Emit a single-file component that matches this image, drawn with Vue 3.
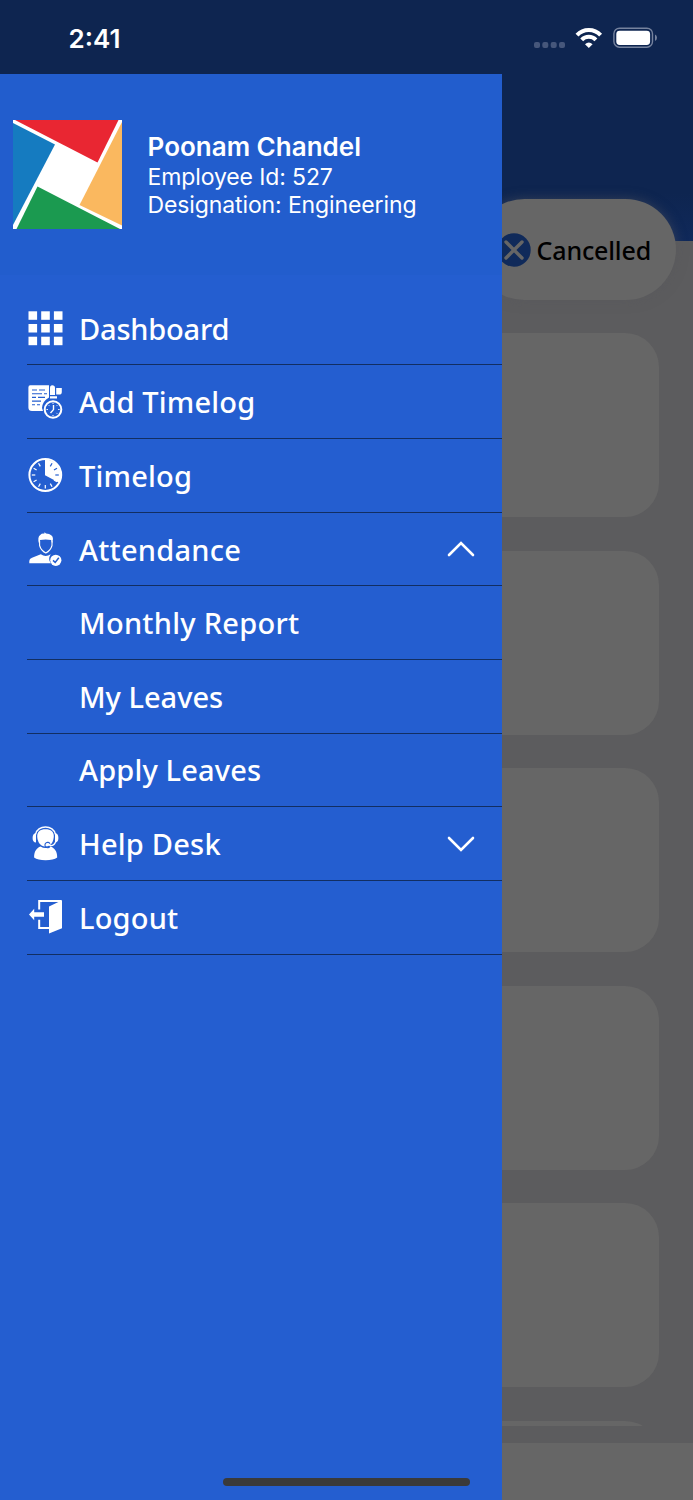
<template>
  <div class="screen">
    <div class="page">
      <header class="page-header"></header>
      <div class="tabs">
        <div class="pill">
          <svg class="pill-icon" viewBox="0 0 34 34">
            <circle cx="17" cy="17" r="16.7" fill="#102a5a" />
            <path d="M9 9L25 25M25 9L9 25" stroke="#666" stroke-width="3.4" stroke-linecap="round" />
          </svg>
          <span class="pill-label">Cancelled</span>
        </div>
      </div>
      <main class="cards">
        <div v-for="n in 6" :key="n" class="card"></div>
      </main>
      <footer class="page-footer"></footer>
    </div>

    <div class="status-bar">
      <span class="time">2:41</span>
      <svg class="status-icons" viewBox="0 0 126 24">
        <g fill="#46577b">
          <rect x="1" y="15" width="6" height="6" rx="2" />
          <rect x="9.3" y="15" width="6" height="6" rx="2" />
          <rect x="17.7" y="15" width="6" height="6" rx="2" />
          <rect x="26" y="15" width="6" height="6" rx="2" />
        </g>
        <g fill="none" stroke="#fff" stroke-width="4">
          <path d="M44 8.2A16 16 0 0 1 67.6 8.2" />
          <path d="M48.7 12.8A9.8 9.8 0 0 1 62.9 12.8" />
        </g>
        <path d="M52 17.2Q55.8 14 59.6 17.2L55.8 21Z" fill="#fff" />
        <rect x="80.9" y="1.2" width="38.6" height="19" rx="5.6" fill="none" stroke="#76839e" stroke-width="1.4" />
        <rect x="83.3" y="3.7" width="33.8" height="14.2" rx="3.4" fill="#fff" />
        <path d="M122 7.5Q124 8.5 124 10.8Q124 13 122 14Z" fill="#76839e" />
      </svg>
    </div>

    <aside class="drawer">
      <section class="profile">
        <svg class="logo" viewBox="0 0 109 109">
          <rect width="109" height="109" fill="#fff" />
          <path d="M2 0H105.5L84.5 42.5Z" fill="#e92632" />
          <path d="M0 3L42 24.5L0 105Z" fill="#157bc0" />
          <path d="M109 2V105.5L66.5 85Z" fill="#fab85f" />
          <path d="M3.5 109L24.5 66.5L107 109Z" fill="#1b9a50" />
        </svg>
        <div class="profile-text">
          <div class="name">Poonam Chandel</div>
          <div class="detail">Employee Id: 527</div>
          <div class="detail">Designation: Engineering</div>
        </div>
      </section>

      <nav class="menu">
        <div v-for="item in items" :key="item.label" class="menu-item">
          <svg class="menu-icon" viewBox="0 0 36 36" fill="#fff">
            <g v-if="item.icon === 'grid'">
              <template v-for="y in 3" :key="y">
                <rect v-for="x in 3" :key="x" :x="x * 12.7 - 11.2" :y="y * 12.7 - 11.4" width="8.6" height="8.5" />
              </template>
            </g>
            <g v-else-if="item.icon === 'log'">
              <path d="M3.2 1.3H22V13.5Q15.5 17 15 24L16 27H5Q1.4 27 1.4 23.5V3.5Q1.4 1.3 3.2 1.3Z" />
              <path d="M5 6H10M12 6H18M5 9.7H15M17 9.7H20M5 13.4H9M11 13.4H18M5 17.1H14M5 20.8H8M10 20.8H13" fill="none" stroke="#245ed0" stroke-width="1.1" />
              <path d="M23 11V4Q23 1.3 25.2 1.3Q28 1.3 28 4V11ZM29.2 4H34.8V8Q34.8 10.6 32 10.6H29.2ZM23 12.2H30V14.5H23Z" />
              <circle cx="26" cy="25.5" r="8.3" fill="#245ed0" stroke="#fff" stroke-width="2" />
              <path d="M26.5 21V25.6L23.5 29" fill="none" stroke="#fff" stroke-width="1.4" />
              <path d="M26 18.8V20M26 31V32.2M19.5 25.5H20.9M31.2 25.5H32.6M30.2 21.3L29.4 22.1M21.8 21.3L22.6 22.1M29.4 28.9L30.2 29.7" stroke="#fff" />
            </g>
            <g v-else-if="item.icon === 'clock'">
              <circle cx="18.3" cy="18" r="15.9" fill="none" stroke="#fff" stroke-width="2" />
              <path d="M18 18.2V2.5A16 16 0 0 1 32.2 25.8Z" />
              <path v-for="n in 11" :key="n" d="M18.3 4.5V8" :transform="`rotate(${n * 30} 18.3 18)`" :stroke="n < 4 ? '#245ed0' : '#fff'" stroke-width="1.2" />
            </g>
            <g v-else-if="item.icon === 'person'">
              <path d="M12 12.5Q10.2 6 13.2 4Q15 2.2 17.2 2.7L17.6 1.2L19 2.5Q26 3.2 26 8L25.2 12.5L24 9Q18.7 7.8 13.2 9Z" />
              <path d="M12.6 10V14.5Q14 19.6 18.8 22Q23.6 19.6 25 14.5V10" fill="none" stroke="#fff" stroke-width="1.1" />
              <path d="M2.3 32.3V30Q2.3 27.8 5 26.8L13.8 23.3Q18.8 26.7 23.7 23.2Q20.4 28.5 24 32.3Z" />
              <circle cx="28.8" cy="29.3" r="5.6" />
              <path d="M26 29.4L28.2 31.4L31.8 26.8" fill="none" stroke="#245ed0" stroke-width="1.5" />
            </g>
            <g v-else-if="item.icon === 'support'">
              <path d="M8.6 8.5C10 -1.4 27 -1.4 28.4 8.5" fill="none" stroke="#fff" stroke-width="1.5" />
              <path d="M9 7V16.5Q5.6 16.3 5.6 12Q5.6 7.3 9 7ZM28 7V16.5Q31.4 16.3 31.4 12Q31.4 7.3 28 7Z" />
              <path d="M10.2 10C10.2 6 13 3.3 18.5 3.3S26.8 6 26.8 10C26.8 14.5 24.7 20.5 18.5 20.5S10.2 14.5 10.2 10Z" />
              <path d="M7.1 31.5C7.1 25 9.7 21.8 13.5 20.4Q18.5 23.4 23.5 20.4C27.5 21.8 30.2 25 30.2 31.5Q26.5 34.3 18.6 34.3T7.1 31.5Z" />
              <path d="M28.5 16C27.5 19.2 25.5 20 22.2 19.4" fill="none" stroke="#fff" stroke-width="1.2" />
              <path d="M23 17.7A2.7 2.7 0 1 0 22.8 20.7" fill="none" stroke="#245ed0" stroke-width="1.1" />
            </g>
            <g v-else-if="item.icon === 'logout'">
              <path d="M12.2 10.5V2.1H34.5M12.2 20.8V29H22" fill="none" stroke="#fff" stroke-width="2" />
              <path d="M22 7.4L35 1.3V29.3L22 34.5ZM2 15.5L7.2 9.8V13.2H17V17.8H7.2V21.2Z" />
            </g>
          </svg>
          <span class="menu-label" :style="{ letterSpacing: item.spacing + 'px' }">{{ item.label }}</span>
          <svg v-if="item.arrow" class="arrow" viewBox="0 0 28 16">
            <path :d="item.arrow === 'up' ? 'M2 14L14 2L26 14' : 'M2 2L14 14L26 2'" />
          </svg>
        </div>
      </nav>
    </aside>

    <div class="home-indicator"></div>
  </div>
</template>

<script setup>
const items = [
  { label: 'Dashboard', icon: 'grid', spacing: -0.2 },
  { label: 'Add Timelog', icon: 'log', spacing: 0.2 },
  { label: 'Timelog', icon: 'clock', spacing: 0.2 },
  { label: 'Attendance', icon: 'person', arrow: 'up', spacing: 0.25 },
  { label: 'Monthly Report', spacing: 0.27 },
  { label: 'My Leaves', spacing: 0 },
  { label: 'Apply Leaves', spacing: 0.15 },
  { label: 'Help Desk', icon: 'support', arrow: 'down', spacing: 0.22 },
  { label: 'Logout', icon: 'logout', spacing: 0.2 },
];
</script>

<style>
body {
  margin: 0;
}
</style>

<style scoped>
.screen {
  position: relative;
  width: 693px;
  height: 1500px;
  overflow: hidden;
  background: #5c5c5e;
  font-family: Inter, sans-serif;
  color: #fff;
}
.page {
  display: flex;
  flex-direction: column;
  height: 100%;
}
.page-header {
  flex: none;
  height: 241px;
  background: linear-gradient(#0e2550 80%, #10295a);
}
.tabs {
  display: flex;
  justify-content: flex-end;
  margin-top: -42px;
  padding-right: 17px;
}
.pill {
  display: flex;
  align-items: center;
  box-sizing: border-box;
  width: 202px;
  height: 101px;
  padding-left: 22.5px;
  border-radius: 51px;
  background: #666;
  box-shadow: 0 0 12px rgba(88, 88, 92, 0.5);
}
.pill-icon {
  width: 34px;
  height: 34px;
  flex: none;
}
.pill-label {
  margin-left: 6px;
  font-family: 'Noto Sans', sans-serif;
  font-size: 25px;
  font-weight: 500;
  letter-spacing: -0.15px;
  color: #000;
  white-space: nowrap;
}
.cards {
  height: 1093px;
  margin-top: 33px;
  padding: 0 34px;
  overflow: hidden;
}
.card {
  height: 184px;
  margin-bottom: 33.6px;
  border-radius: 34px;
  background: #666;
}
.page-footer {
  height: 57.5px;
  margin-top: auto;
  background: #666;
}
.status-bar {
  position: absolute;
  top: 0;
  left: 0;
  display: flex;
  justify-content: space-between;
  align-items: center;
  box-sizing: border-box;
  width: 100%;
  height: 74px;
  padding: 2px 34px 0 68.5px;
  background: #0e2550;
}
.time {
  font-size: 26px;
  font-weight: 600;
}
.status-icons {
  width: 126px;
  height: 24px;
  margin-top: 2px;
}
.drawer {
  position: absolute;
  top: 74px;
  left: 0;
  width: 502px;
  height: 1426px;
  background: #245ed0;
}
.profile {
  display: flex;
  box-sizing: border-box;
  height: 201px;
  padding: 46px 0 0 13.4px;
  background: #225dcd;
}
.logo {
  width: 109px;
  height: 109px;
}
.profile-text {
  margin: 11px 0 0 25.2px;
  white-space: nowrap;
}
.name {
  font-size: 26px;
  font-weight: 600;
  line-height: 32px;
}
.detail {
  font-size: 23px;
  line-height: 28px;
  letter-spacing: -0.12px;
}
.menu {
  padding: 16.8px 0 0 27px;
}
.menu-item {
  display: flex;
  align-items: center;
  box-sizing: border-box;
  height: 73.65px;
  padding-right: 27px;
  border-bottom: 1px solid #122e62;
}
.menu-icon {
  width: 36px;
  height: 36px;
}
.menu-label {
  margin-left: 16px;
  font-family: 'Noto Sans', sans-serif;
  font-size: 29px;
  font-weight: 500;
  white-space: nowrap;
}
.arrow {
  width: 28px;
  height: 16px;
  margin-left: auto;
  fill: none;
  stroke: #fff;
  stroke-width: 2.6;
  stroke-linecap: round;
}
.home-indicator {
  position: absolute;
  left: 223px;
  bottom: 14px;
  width: 247px;
  height: 8px;
  border-radius: 4px;
  background: #3a3a3a;
}
</style>
